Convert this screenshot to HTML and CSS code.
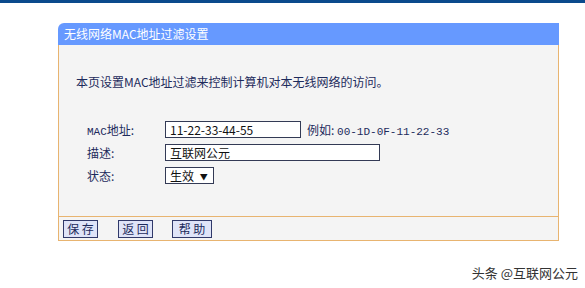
FILE: index.html
```html
<html>
<head>
<link rel="stylesheet" href="styles.css">
</head>
<body>

<div class="topbar"></div>

<div class="panel">
  <div class="title">无线网络MAC地址过滤设置</div>
  <div class="content">
    <p class="intro">本页设置MAC地址过滤来控制计算机对本无线网络的访问。</p>
    <div class="form">
      <div class="row">
        <span class="label"><span class="mono">MAC</span>地址:</span>
        <span class="field mac">11-22-33-44-55</span>
        <span class="hint">例如: <span class="mono">00-1D-0F-11-22-33</span></span>
      </div>
      <div class="row">
        <span class="label">描述:</span>
        <span class="field desc">互联网公元</span>
      </div>
      <div class="row">
        <span class="label">状态:</span>
        <span class="field select">生效 <span class="arrow">&#9660;</span></span>
      </div>
    </div>
  </div>
  <div class="footer">
    <span class="btn">保 存</span>
    <span class="btn">返 回</span>
    <span class="btn wide">帮 助</span>
  </div>
</div>

<div class="mark">头条 @互联网公元</div>

</body>
</html>
```

FILE: styles.css
```css
body    { margin:0;font-family:"Noto Sans CJK SC",sans-serif;font-size:12px;
          color:#1d2b5c;background:#ffffff }
.topbar { height:3px;background:#0b4a8c }

.panel  { margin:20px 0 0 58px;width:501px }
.title  { height:22px;line-height:22px;padding-left:6px;color:#ffffff;
          background:#6699ff;border-top-left-radius:6px;font-size:12px }
.content{ height:171px;background:#f4f4f4;border:1px solid #e8b470;
          border-top:0;border-bottom:0;box-sizing:border-box;padding:29px 0 0 17px }
.intro  { margin:0 0 31px 0;line-height:16px }

.form   { display:flex;flex-direction:column;gap:6px;padding-left:11px }
.row    { display:flex;align-items:center;height:17px }
.label  { width:78px }
.mono   { font-family:"Liberation Mono",monospace;font-size:11px }
.field  { height:17px;box-sizing:border-box;border:1px solid #333a55;background:#ffffff;
          color:#111111;font-size:12px;line-height:15px;padding-left:4px }
.mac    { width:136px }
.desc   { width:215px }
.select { width:49px }
.arrow  { font-size:8px;padding-left:3px;vertical-align:1px }
.hint   { margin-left:6px }

.footer { height:25px;background:#f4f4f4;border:1px solid #e8b470;box-sizing:border-box;
          display:flex;align-items:center;gap:20px;padding-left:4px }
.btn    { width:35px;height:18px;line-height:16px;box-sizing:border-box;text-align:center;
          border:1px solid #30396a;background:#dfe4f8;color:#1d2b5c;font-size:12px }
.wide   { width:40px;margin-left:-1px }

.mark   { margin:22px 7px 0 0;text-align:right;font-size:13px;color:#333333 }
```
